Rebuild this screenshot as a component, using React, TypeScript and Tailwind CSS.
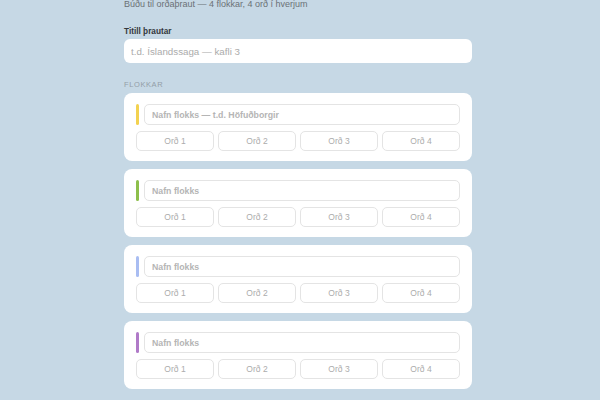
const categories = [
  { accent: "bg-[#f3d250]", placeholder: "Nafn flokks — t.d. Höfuðborgir" },
  { accent: "bg-[#8dbf4b]", placeholder: "Nafn flokks" },
  { accent: "bg-[#a9bdf2]", placeholder: "Nafn flokks" },
  { accent: "bg-[#b07ac8]", placeholder: "Nafn flokks" },
]

const CategoryCard = ({ accent, placeholder }: { accent: string; placeholder: string }) => {
  return (
    <div className="rounded-[8px] bg-white px-3 pt-[11px] pb-[10px]">
      <div className="flex items-center gap-[5px]">
        <div className={`w-[3px] h-[21px] rounded-full ${accent}`} />
        <input
          placeholder={placeholder}
          className="flex-1 h-[21px] rounded-[5px] border border-[#e4e4e4] pl-[7px] text-[8.75px] font-bold outline-none placeholder:text-[#b5b5b5]"
        />
      </div>
      <div className="grid grid-cols-4 gap-[4px] mt-[6px]">
        {[1, 2, 3, 4].map((n) => (
          <input
            key={n}
            placeholder={`Orð ${n}`}
            className="h-[20px] w-full rounded-[5px] border border-[#e4e4e4] text-center text-[8.5px] outline-none placeholder:text-[#acacac]"
          />
        ))}
      </div>
    </div>
  )
}

export default function App() {
  return (
    <div className="min-h-screen w-full bg-[#c6d8e5] overflow-hidden" style={{ fontFamily: '"Liberation Sans", Arial, sans-serif' }}>
      <div className="ml-[124px] w-[348px]">
        <p className="mt-[-2px] text-[9px] leading-3 text-[#6b7176]">
          Búðu til orðaþraut — 4 flokkar, 4 orð í hverjum
        </p>
        <label className="block mt-[16px] text-[8.25px] leading-[11px] font-bold text-[#33373b]">
          Titill þrautar
        </label>
        <input
          placeholder="t.d. Íslandssaga — kafli 3"
          className="mt-[2px] block w-full h-[24px] rounded-[6px] bg-white pl-[7px] text-[9.75px] outline-none placeholder:text-[#ababab]"
        />
        <div className="mt-[17px] text-[7.5px] leading-[10px] tracking-[0.08em] text-[#939ea7]">FLOKKAR</div>
        <div className="mt-[3px] flex flex-col gap-[8px]">
          {categories.map((c, i) => (
            <CategoryCard key={i} accent={c.accent} placeholder={c.placeholder} />
          ))}
        </div>
      </div>
    </div>
  )
}
